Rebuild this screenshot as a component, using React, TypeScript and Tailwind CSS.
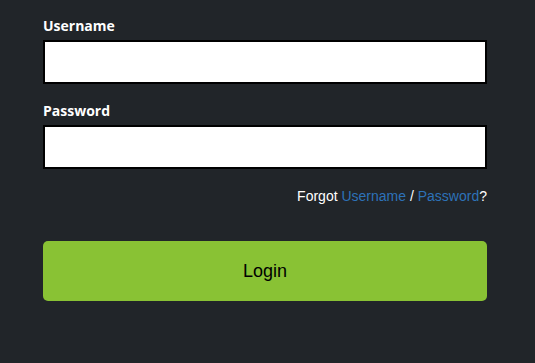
import React from "react";

export default function App() {
  return (
    <div className="min-h-[363px] w-full bg-[#212529]">
      <form
        className="ml-[43px] w-[444px] pt-[16px]"
        onSubmit={e => e.preventDefault()}
      >
        <label className="block text-[14px] leading-5 font-bold text-white font-['Open_Sans',sans-serif]">
          Username
        </label>
        <input
          type="text"
          className="mt-[4px] block h-[44px] w-full border-2 border-black bg-white px-2 outline-none"
        />

        <label className="mt-[17px] block text-[14px] leading-5 font-bold text-white font-['Open_Sans',sans-serif]">
          Password
        </label>
        <input
          type="password"
          className="mt-[4px] block h-[44px] w-full border-2 border-black bg-white px-2 outline-none"
        />

        <p className="mt-[19px] text-right text-[14px] leading-4 text-white font-['Liberation_Sans',Arial,sans-serif]">
          Forgot <a href="#" className="text-[#2d72b8]">Username</a> /{" "}
          <a href="#" className="text-[#2d72b8]">Password</a>?
        </p>

        <button
          type="submit"
          className="mt-[37px] flex h-[60px] w-full items-center justify-center rounded-[5px] bg-[#89c234] text-[18px] text-black font-['Liberation_Sans',Arial,sans-serif]"
        >
          Login
        </button>
      </form>
    </div>
  );
}
